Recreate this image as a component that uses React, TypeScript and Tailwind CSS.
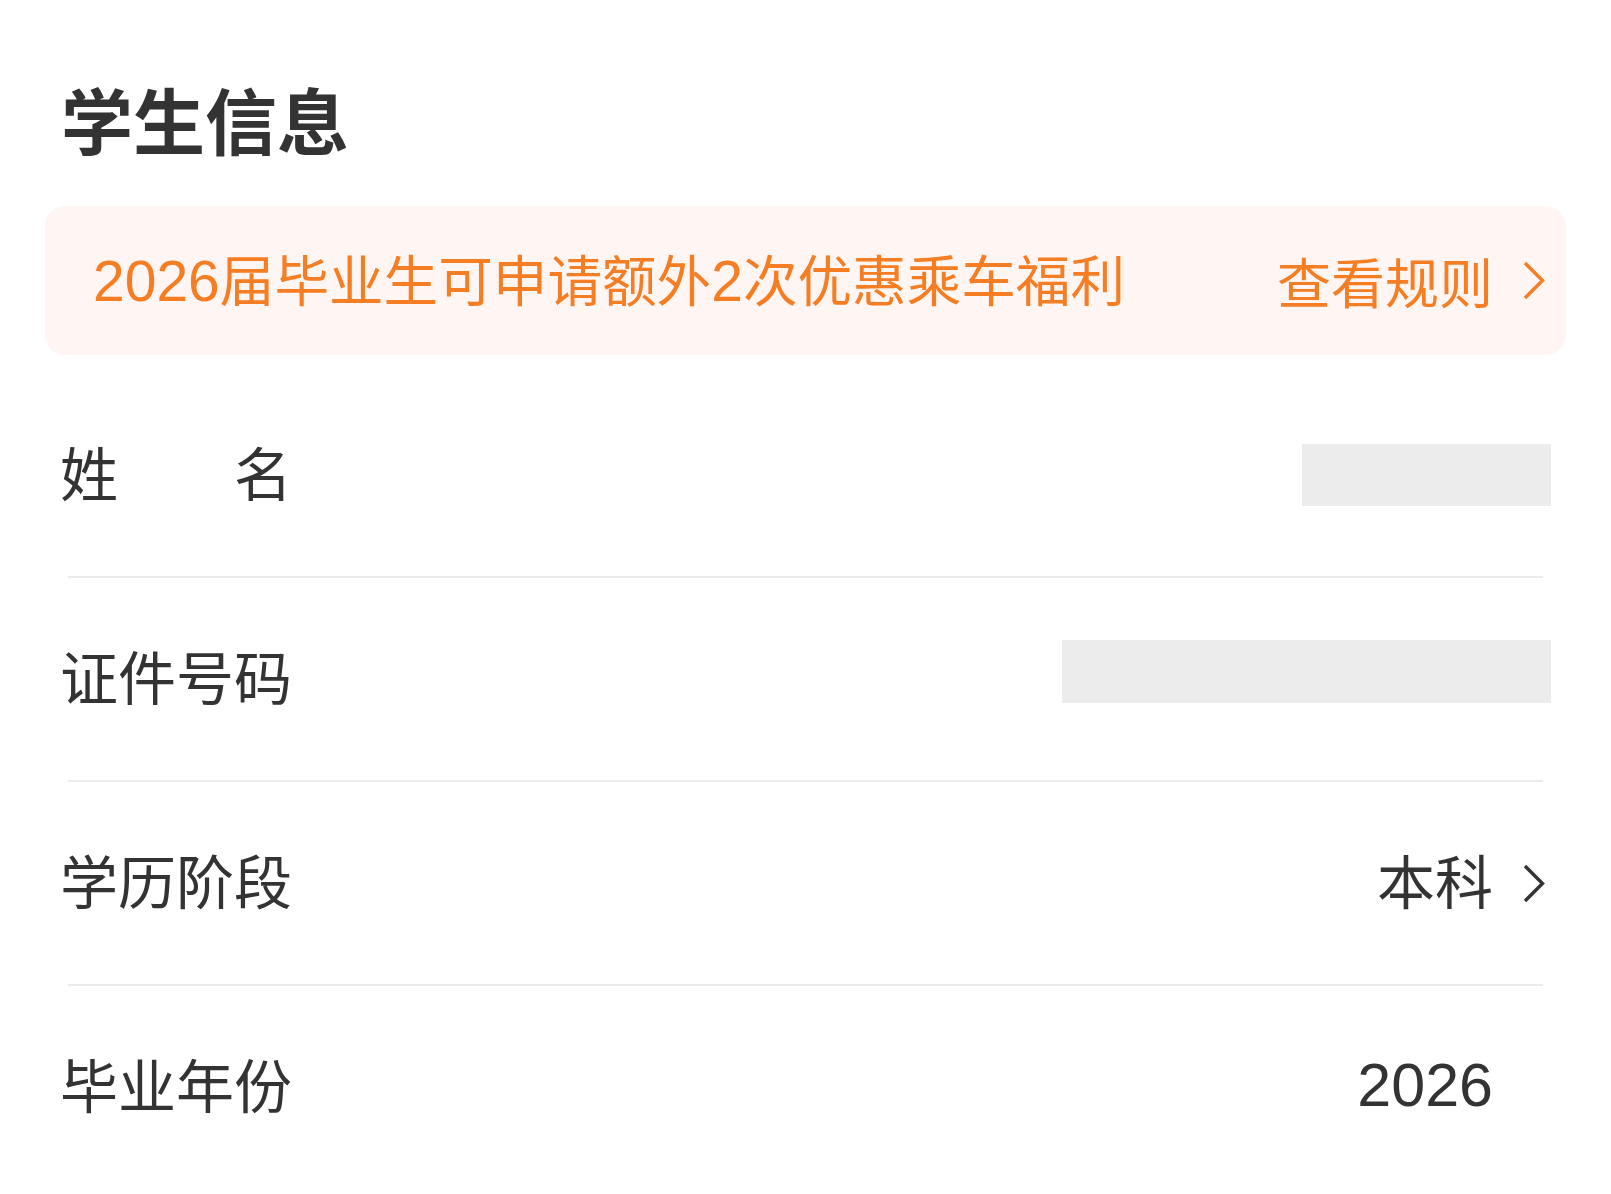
import React from "react";

const CJK = { fontFamily: '"Noto Sans CJK SC", "Noto Sans", sans-serif' };

function Chevron({ color, hidden }: { color: string; hidden?: boolean }) {
  return (
    <svg
      width="22"
      height="39"
      viewBox="0 0 22 39"
      fill="none"
      className={hidden ? "invisible" : ""}
    >
      <polyline
        points="2,2 19.5,19.5 2,37"
        stroke={color}
        strokeWidth="3.4"
        strokeLinejoin="miter"
        fill="none"
      />
    </svg>
  );
}

function Divider() {
  return <div className="mx-[68px] h-[2px] bg-[#ebebeb]" />;
}

function Row({ label, children }: { label: React.ReactNode; children: React.ReactNode }) {
  return (
    <div className="flex h-[202px] items-center justify-between pl-[60px] pr-[60px]">
      <div className="pb-[8px] text-[58px] leading-none text-[#333333]" style={CJK}>
        {label}
      </div>
      <div className="flex items-center">{children}</div>
    </div>
  );
}

export default function App() {
  return (
    <div
      className="min-h-[1194px] w-full bg-white"
      style={{ fontFamily: '"Liberation Sans", "Noto Sans CJK SC", sans-serif' }}
    >
      <div className="pl-[61px] pt-[82px]">
        <h1
          className="text-[72px] font-bold leading-none text-[#333333]"
          style={CJK}
        >
          学生信息
        </h1>
      </div>

      <div className="mx-[45px] mt-[52px] flex h-[149px] items-center justify-between rounded-[20px] bg-[#fff6f3] pl-[48px] pr-[21px] text-[#f57d24]">
        <div className="text-[54px] leading-none">
          <span className="text-[57px]">2026</span>
          <span className="text-[54.6px]" style={CJK}>
            届毕业生可申请额外
          </span>
          <span className="text-[57px]">2</span>
          <span className="text-[54.6px]" style={CJK}>
            次优惠乘车福利
          </span>
        </div>
        <div className="flex items-center gap-[30px]">
          <span className="text-[54px] leading-none" style={CJK}>
            查看规则
          </span>
          <Chevron color="#f57d24" />
        </div>
      </div>

      <div className="mt-[19px]">
        <Row
          label={
            <div className="flex w-[232px] justify-between">
              <span>姓</span>
              <span>名</span>
            </div>
          }
        >
          <div className="h-[62px] w-[249px] bg-[#ececec]" />
        </Row>
        <Divider />
        <Row label="证件号码">
          <div className="mb-[16px] h-[63px] w-[489px] bg-[#ececec]" />
        </Row>
        <Divider />
        <Row label="学历阶段">
          <span className="pb-[8px] text-[58px] leading-none text-[#333333]" style={CJK}>
            本科
          </span>
          <div className="ml-[30px] w-[28px]">
            <Chevron color="#333333" />
          </div>
        </Row>
        <Divider />
        <Row label="毕业年份">
          <span className="pb-[4px] text-[61px] leading-none text-[#333333]">2026</span>
          <div className="ml-[30px] w-[28px]">
            <Chevron color="#333333" hidden />
          </div>
        </Row>
      </div>
    </div>
  );
}
